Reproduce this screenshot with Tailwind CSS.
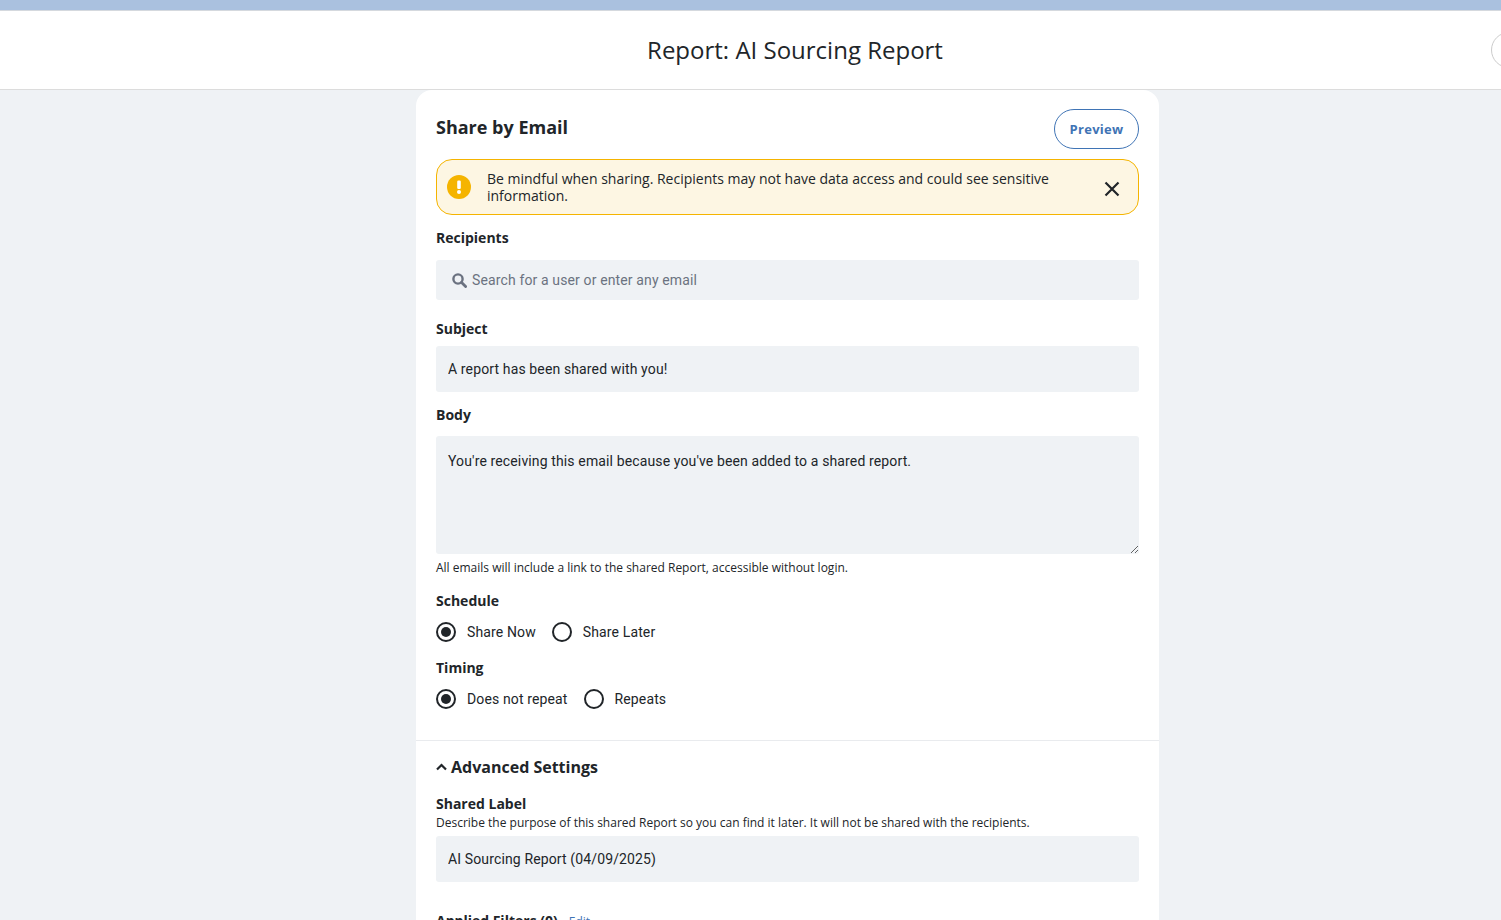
<!DOCTYPE html>
<html lang="en">
  <head>
    <meta charset="UTF-8" />
    <meta name="viewport" content="width=device-width, initial-scale=1.0" />
    <title>Report: AI Sourcing Report</title>
    <script src="https://cdn.jsdelivr.net/npm/@tailwindcss/browser@4"></script>
  </head>
  <body class="bg-[#eff2f5] h-[920px] overflow-hidden font-['Roboto',sans-serif] text-[#212529]">
    <!-- Top strip -->
    <div class="h-[11px] bg-[#aac1df] border-b border-[#d5d9de]"></div>

    <!-- Page header -->
    <header class="relative h-[79px] bg-white border-b border-[#dcdcdc] overflow-hidden">
      <div class="w-[1590px] h-full flex items-center justify-center pb-[1px]">
        <h1 class="font-['Open_Sans',sans-serif] text-[24px] leading-[32px] text-[#212529]">Report: AI Sourcing Report</h1>
      </div>
      <div class="absolute left-[1491px] top-[21px] w-[36px] h-[36px] rounded-full border border-[#cccccc] bg-white"></div>
    </header>

    <!-- Share card -->
    <main class="ml-[416px] w-[743px] bg-white rounded-t-[16px] pt-[19px]">
      <div class="px-[20px]">
        <div class="flex items-center justify-between h-[40px]">
          <h2 class="font-['Open_Sans',sans-serif] font-bold text-[18px] leading-[24px] text-[#212529] -mt-[4px]">Share by Email</h2>
          <button class="w-[85px] h-[40px] pt-[1px] rounded-full border border-[#3f74b5] text-[#3f74b5] font-['Open_Sans',sans-serif] font-bold text-[13px] tracking-[0.3px]">Preview</button>
        </div>

        <!-- Warning -->
        <div class="mt-[10px] h-[56px] flex items-center rounded-[16px] border border-[#f5b400] bg-[#fdf6e3] pl-[10px] pr-[18px]">
          <svg class="w-[24px] h-[24px] shrink-0" viewBox="0 0 24 24">
            <circle cx="12" cy="12" r="12" fill="#f5b400" />
            <rect x="10.2" y="5.5" width="3.6" height="8.5" rx="1.2" fill="#fff" />
            <circle cx="12" cy="17" r="2" fill="#fff" />
          </svg>
          <p class="ml-[16px] w-[590px] font-['Open_Sans',sans-serif] text-[14px] leading-[17px] text-[#212529]">Be mindful when sharing. Recipients may not have data access and could see sensitive information.</p>
          <svg class="ml-auto mt-[4px] w-[16px] h-[16px] shrink-0" viewBox="0 0 16 16" fill="none" stroke="#212529" stroke-width="2.2">
            <path d="M1.5 1.5 14.5 14.5M14.5 1.5 1.5 14.5" />
          </svg>
        </div>

        <!-- Recipients -->
        <label class="block mt-[14px] font-['Open_Sans',sans-serif] font-bold text-[14px] leading-[18px]">Recipients</label>
        <div class="mt-[13px] h-[40px] flex items-center rounded-[3px] bg-[#eff2f5] pl-[16px]">
          <svg class="w-[15px] h-[15px] shrink-0" viewBox="0 0 15 15" fill="none" stroke="#6b7280" stroke-width="2.4">
            <circle cx="6" cy="6" r="4.6" />
            <path d="M9.6 9.6 13.6 13.6" stroke-width="2.8" stroke-linecap="round" />
          </svg>
          <input class="ml-[5px] flex-1 bg-transparent outline-none text-[14px] tracking-[0.13px] placeholder:text-[#6b7280]" placeholder="Search for a user or enter any email" />
        </div>

        <!-- Subject -->
        <label class="block mt-[20px] font-['Open_Sans',sans-serif] font-bold text-[14px] leading-[18px]">Subject</label>
        <input class="mt-[8px] block w-full h-[46px] rounded-[3px] bg-[#eff2f5] px-[12px] outline-none text-[14px] tracking-[0.13px] text-[#212529]" value="A report has been shared with you!" />

        <!-- Body -->
        <label class="block mt-[14px] font-['Open_Sans',sans-serif] font-bold text-[14px] leading-[18px]">Body</label>
        <textarea class="mt-[12px] block w-full h-[118px] rounded-[3px] bg-[#eff2f5] px-[12px] py-[17px] outline-none text-[14px] leading-[16px] tracking-[0.13px] text-[#212529]">You're receiving this email because you've been added to a shared report.</textarea>
        <p class="mt-[6px] font-['Open_Sans',sans-serif] text-[12px] leading-[16px] text-[#212529]">All emails will include a link to the shared Report, accessible without login.</p>

        <!-- Schedule -->
        <label class="block mt-[16px] font-['Open_Sans',sans-serif] font-bold text-[14px] leading-[18px]">Schedule</label>
        <div class="mt-[12px] flex items-center h-[20px] text-[14px] tracking-[0.13px]">
          <span class="w-[20px] h-[20px] rounded-full border-2 border-[#212529] flex items-center justify-center"><span class="w-[10px] h-[10px] rounded-full bg-[#212529]"></span></span>
          <span class="ml-[11px]">Share Now</span>
          <span class="ml-[16px] w-[20px] h-[20px] rounded-full border-2 border-[#212529]"></span>
          <span class="ml-[11px]">Share Later</span>
        </div>

        <!-- Timing -->
        <label class="block mt-[17px] font-['Open_Sans',sans-serif] font-bold text-[14px] leading-[18px]">Timing</label>
        <div class="mt-[12px] flex items-center h-[20px] text-[14px] tracking-[0.13px]">
          <span class="w-[20px] h-[20px] rounded-full border-2 border-[#212529] flex items-center justify-center"><span class="w-[10px] h-[10px] rounded-full bg-[#212529]"></span></span>
          <span class="ml-[11px]">Does not repeat</span>
          <span class="ml-[16px] w-[20px] h-[20px] rounded-full border-2 border-[#212529]"></span>
          <span class="ml-[11px]">Repeats</span>
        </div>
      </div>

      <!-- Advanced settings -->
      <div class="mt-[31px] border-t border-[#e9ebee] px-[20px] pt-[15px]">
        <div class="flex items-center h-[22px]">
          <svg class="w-[11px] h-[8px] shrink-0" viewBox="0 0 11 8" fill="none" stroke="#212529" stroke-width="2.2">
            <path d="M1 6.5 5.5 2 10 6.5" />
          </svg>
          <h3 class="ml-[4px] font-['Open_Sans',sans-serif] font-bold text-[16px] leading-[22px]">Advanced Settings</h3>
        </div>
        <label class="block mt-[17px] font-['Open_Sans',sans-serif] font-bold text-[14px] leading-[18px]">Shared Label</label>
        <p class="mt-[2px] font-['Open_Sans',sans-serif] text-[12px] leading-[16px]">Describe the purpose of this shared Report so you can find it later. It will not be shared with the recipients.</p>
        <input class="mt-[5px] block w-full h-[46px] rounded-[3px] bg-[#eff2f5] px-[12px] outline-none text-[14px] tracking-[0.13px] text-[#212529]" value="AI Sourcing Report (04/09/2025)" />
        <div class="mt-[30px] flex items-baseline">
          <span class="font-['Open_Sans',sans-serif] font-bold text-[14px] leading-[18px]">Applied Filters (0)</span>
          <a class="ml-[11px] font-['Open_Sans',sans-serif] text-[12px] text-[#3f74b5]">Edit</a>
        </div>
      </div>
    </main>
  </body>
</html>
